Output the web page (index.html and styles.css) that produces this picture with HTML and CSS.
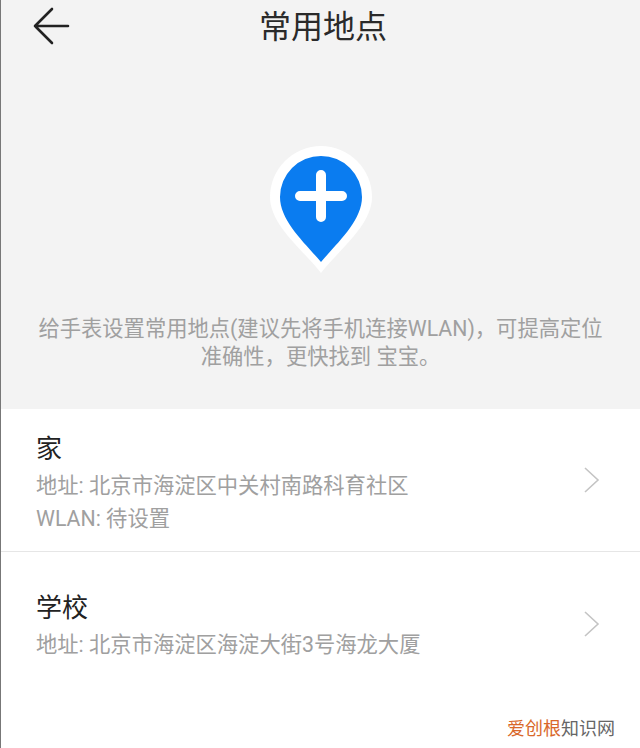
FILE: index.html
```html
<!DOCTYPE html>
<html lang="zh-CN">
<head>
    <meta charset="UTF-8">
    <meta name="viewport" content="width=device-width, initial-scale=1.0">
    <title>常用地点</title>
    <link rel="stylesheet" href="styles.css">
</head>
<body>
    <div class="page">
        <div class="top">
            <div class="header">
                <svg class="back" width="40" height="40" viewBox="0 0 40 40" fill="none" stroke="#222" stroke-width="2.6" stroke-linecap="round" stroke-linejoin="round">
                    <path d="M20 3 L3 20 L20 37 M3 20 H36"/>
                </svg>
                <h1>常用地点</h1>
            </div>
            <svg class="pin" width="104" height="130" viewBox="0 0 104 130">
                <path d="M52 128 C34 105 1 80 1 52 A51 51 0 0 1 103 52 C103 80 70 105 52 128 Z" fill="#fff"/>
                <path d="M52 117 C36 98 11 76 11 52 A41 41 0 0 1 93 52 C93 76 68 98 52 117 Z" fill="#0a7cf0"/>
                <path d="M52 30 V72 M31 51 H73" stroke="#fff" stroke-width="10" stroke-linecap="round"/>
            </svg>
            <p class="intro">给手表设置常用地点(建议先将手机连接WLAN)，可提高定位<br>准确性，更快找到 宝宝。</p>
        </div>
        <div class="place place-home">
            <div class="place-text">
                <div class="place-name">家</div>
                <div class="place-info">地址: 北京市海淀区中关村南路科育社区</div>
                <div class="place-info">WLAN: 待设置</div>
            </div>
            <svg class="arrow" width="18" height="28" viewBox="0 0 18 28" fill="none" stroke="#c4c4c4" stroke-width="1.6">
                <path d="M2 2 L15 14 L2 26"/>
            </svg>
        </div>
        <div class="place place-school">
            <div class="place-text">
                <div class="place-name">学校</div>
                <div class="place-info">地址: 北京市海淀区海淀大街3号海龙大厦</div>
            </div>
            <svg class="arrow" width="18" height="28" viewBox="0 0 18 28" fill="none" stroke="#c4c4c4" stroke-width="1.6">
                <path d="M2 2 L15 14 L2 26"/>
            </svg>
        </div>
        <div class="watermark"><span class="mark-orange">爱创根</span>知识网</div>
    </div>
</body>
</html>
```

FILE: styles.css
```css
html, body {
    margin: 0;
    padding: 0;
}

body {
    font-family: "Roboto", "Noto Sans CJK SC", sans-serif;
    background-color: #fff;
}

.page {
    position: relative;
    width: 640px;
    height: 748px;
    box-sizing: border-box;
    border-left: 1px solid #777;
    overflow: hidden;
}

.top {
    height: 409px;
    background-color: #f3f3f3;
    display: flex;
    flex-direction: column;
    align-items: center;
}

.header {
    width: 100%;
    height: 48px;
    display: flex;
    align-items: center;
    justify-content: center;
}

.back {
    position: absolute;
    top: 6px;
    left: 31px;
}

h1 {
    margin: 0 0 0 5px;
    font-size: 32px;
    font-weight: 400;
    color: #2a2a2a;
}

.pin {
    margin-top: 97px;
}

.intro {
    margin: 40px 0 0;
    font-size: 21.3px;
    line-height: 28px;
    color: #a0a0a0;
    text-align: center;
    white-space: nowrap;
}

.place {
    padding: 0 39px 0 35px;
    display: flex;
    align-items: center;
    justify-content: space-between;
}

.place-home {
    border-bottom: 1px solid #e6e6e6;
}

.place-home .place-text {
    padding: 23px 0 16px;
}

.place-school .place-text {
    padding: 39px 0 34px;
}

.place-name {
    font-size: 26px;
    line-height: 35px;
    color: #222;
}

.place-name + .place-info {
    margin-top: 2px;
}

.place-info {
    font-size: 21.3px;
    line-height: 33px;
    color: #a0a0a0;
}

.watermark {
    position: absolute;
    right: 25px;
    bottom: 8px;
    font-size: 18px;
    line-height: 22px;
    color: #666;
}

.mark-orange {
    color: #d9682a;
}
```
